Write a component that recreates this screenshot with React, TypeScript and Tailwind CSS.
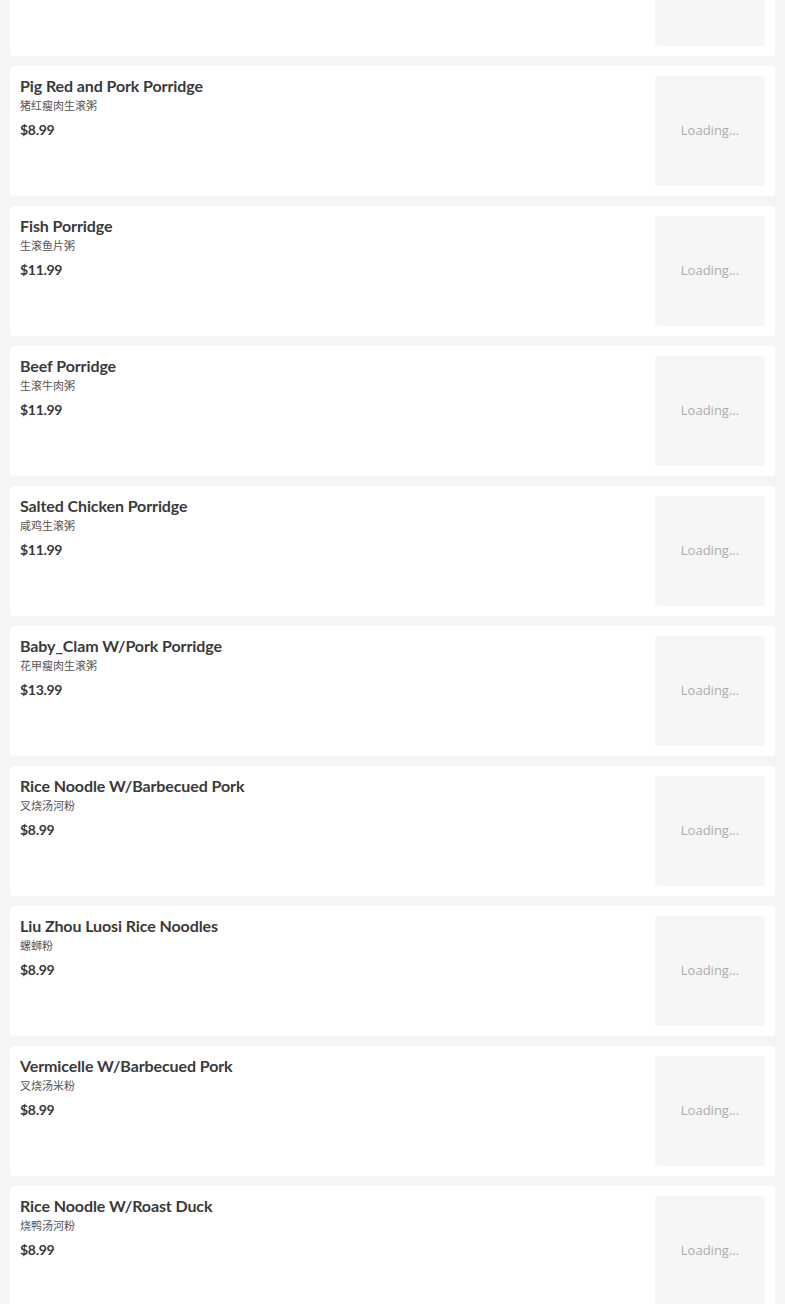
type MenuItem = {
    name: string;
    zh: string;
    price: string;
};

const items: MenuItem[] = [
    { name: 'Lean Pork Porridge', zh: '瘦肉生滚粥', price: '$8.99' },
    { name: 'Pig Red and Pork Porridge', zh: '猪红瘦肉生滚粥', price: '$8.99' },
    { name: 'Fish Porridge', zh: '生滚鱼片粥', price: '$11.99' },
    { name: 'Beef Porridge', zh: '生滚牛肉粥', price: '$11.99' },
    { name: 'Salted Chicken Porridge', zh: '咸鸡生滚粥', price: '$11.99' },
    { name: 'Baby_Clam W/Pork Porridge', zh: '花甲瘦肉生滚粥', price: '$13.99' },
    { name: 'Rice Noodle W/Barbecued Pork', zh: '叉烧汤河粉', price: '$8.99' },
    { name: 'Liu Zhou Luosi Rice Noodles', zh: '螺蛳粉', price: '$8.99' },
    { name: 'Vermicelle W/Barbecued Pork', zh: '叉烧汤米粉', price: '$8.99' },
    { name: 'Rice Noodle W/Roast Duck', zh: '烧鸭汤河粉', price: '$8.99' },
];

const MenuCard = ({ item }: { item: MenuItem }) => {
    return (
        <div className="flex justify-between bg-white rounded-[4px] p-[10px] h-[130px] shrink-0">
            <div className="flex flex-col">
                <h3 className="text-[16px] leading-[20px] font-bold text-[#3a3a3a] tracking-[-0.1px]">{item.name}</h3>
                <p className="mt-[1px] text-[11px] leading-[18px] text-[#555]">{item.zh}</p>
                <span className="mt-[6px] text-[14px] leading-[18px] font-bold text-[#3a3a3a] tracking-[-0.3px]">
                    {item.price}
                </span>
            </div>
            <div className="w-[110px] h-[110px] rounded-[4px] bg-[#f6f6f6] flex items-center justify-center">
                <span className="text-[13px] text-[#acacac]" style={{ fontFamily: '"Open Sans", sans-serif' }}>
                    Loading...
                </span>
            </div>
        </div>
    );
};

export default function App() {
    return (
        <div
            className="w-[785px] h-[1304px] overflow-hidden bg-[#f5f5f5]"
            style={{ fontFamily: 'Lato, "Noto Sans CJK SC", sans-serif' }}
        >
            <div className="flex flex-col gap-[10px] px-[10px] -mt-[74px]">
                {items.map((item) => (
                    <MenuCard key={item.name} item={item} />
                ))}
            </div>
        </div>
    );
}
